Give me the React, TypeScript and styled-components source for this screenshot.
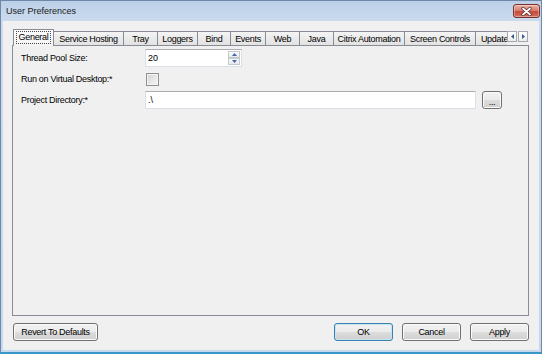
import React from 'react';
import styled, { createGlobalStyle, css } from 'styled-components';

const Global = createGlobalStyle`
  html, body { margin: 0; padding: 0; background: #ffffff; }
  body { font-family: "Liberation Sans", Arial, sans-serif; }
  * { box-sizing: border-box; }
`;

const Window = styled.div`
  width: 542px;
  height: 354px;
  display: flex;
  flex-direction: column;
  background: linear-gradient(#bcd0e8, #cddcef 22px, #c6d8ec);
  border: 1px solid #6f88a9;
  border-bottom: 2px solid #3a95c9;
`;

const TitleBar = styled.header`
  height: 20px;
  flex: none;
  display: flex;
  align-items: flex-start;
  justify-content: space-between;
  padding-left: 5px;
`;

const Title = styled.span`
  font-size: 9px;
  line-height: 20px;
  color: #1a1a1a;
`;

const CloseButton = styled.div`
  width: 27px;
  height: 14px;
  margin-top: 3px;
  margin-right: 1px;
  border: 1px solid #7a3129;
  border-radius: 3px;
  background: linear-gradient(#eab0a6 0%, #d98171 45%, #c5493a 55%, #d0705e 100%);
  box-shadow: inset 0 0 0 1px rgba(255, 255, 255, 0.35);
  display: flex;
  align-items: center;
  justify-content: center;
`;

const Client = styled.main`
  flex: 1;
  min-height: 0;
  margin: 0 2px 2px;
  background: #f0f0f0;
  display: flex;
  flex-direction: column;
  padding: 8px 10px 9px 9px;
  font-size: 9px;
  letter-spacing: -0.3px;
  color: #000;
`;

const TabControl = styled.div`
  flex: 1;
  min-height: 0;
  display: flex;
  flex-direction: column;
`;

const TabStrip = styled.div`
  height: 16px;
  flex: none;
  display: flex;
  align-items: flex-end;
  position: relative;
  z-index: 1;
`;

const TabViewport = styled.div`
  flex: 1;
  min-width: 0;
  height: 100%;
  display: flex;
  align-items: flex-end;
  padding-left: 1px;
  overflow-x: clip;
  overflow-y: visible;
`;

const Tab = styled.div<{ $w: number; $active?: boolean }>`
  flex: none;
  width: ${(p) => p.$w}px;
  height: 14px;
  margin-left: -1px;
  border: 1px solid #898c95;
  border-bottom: none;
  background: linear-gradient(#f4f4f4, #e2e2e2);
  display: flex;
  align-items: center;
  justify-content: center;
  white-space: nowrap;
  overflow: hidden;
  color: #000;
  &:first-child {
    margin-left: 0;
  }
  ${(p) =>
    p.$active &&
    css`
      height: 17px;
      margin-bottom: -1px;
      padding-bottom: 1px;
      background: linear-gradient(#fdfdfd, #f3f3f3);
      position: relative;
      z-index: 2;
    `}
`;

const FocusLabel = styled.span`
  outline: 1px dotted #444;
  outline-offset: 0;
  padding: 0 2px;
  line-height: 11px;
`;

const ScrollButtons = styled.div`
  flex: none;
  align-self: flex-start;
  display: flex;
  gap: 1px;
  margin: 2px 1px 0 0;
`;

const ScrollButton = styled.div`
  width: 10px;
  height: 11px;
  border: 1px solid #a5a9b2;
  background: linear-gradient(#ffffff, #ececec);
  display: flex;
  align-items: center;
  justify-content: center;
`;

const TabPanel = styled.section`
  flex: 1;
  min-height: 0;
  border: 1px solid #898c95;
  background: #f0f0f0;
  padding: 3px 0 0 8px;
  display: grid;
  grid-template-columns: 124px auto;
  grid-auto-rows: 18px;
  row-gap: 3px;
  align-content: start;
  align-items: center;
`;

const Label = styled.label`
  white-space: nowrap;
`;

const TextBox = styled.div<{ $w: number }>`
  width: ${(p) => p.$w}px;
  height: 18px;
  background: #fff;
  border: 1px solid #dbdfe6;
  border-top-color: #abadb3;
  display: flex;
  align-items: stretch;
`;

const TextValue = styled.span`
  flex: 1;
  padding-left: 2px;
  display: flex;
  align-items: center;
  letter-spacing: 0;
`;

const Spin = styled.div`
  width: 12px;
  margin: 1px 1px 1px 0;
  display: flex;
  flex-direction: column;
`;

const SpinHalf = styled.div`
  flex: 1;
  border: 1px solid #c3c7ce;
  background: linear-gradient(#fbfbfb, #e6e8ec);
  display: flex;
  align-items: center;
  justify-content: center;
`;

const CheckBox = styled.div`
  width: 13px;
  height: 13px;
  margin-left: 1px;
  border: 1px solid #8e8f8f;
  background: linear-gradient(135deg, #d3d3d3, #f6f6f6);
  box-shadow: inset 0 0 0 1px #f4f4f4;
`;

const Field = styled.div`
  display: flex;
  align-items: center;
  gap: 6px;
`;

const Footer = styled.footer`
  flex: none;
  display: flex;
  align-items: center;
  gap: 9px;
  margin-top: 7px;
  padding-left: 1px;
`;

const Spacer = styled.div`
  flex: 1;
`;

const Button = styled.button<{ $w: number; $default?: boolean }>`
  width: ${(p) => p.$w}px;
  height: 18px;
  padding: 0;
  font: inherit;
  letter-spacing: inherit;
  color: #000;
  border: 1px solid #707070;
  border-radius: 3px;
  background: linear-gradient(#f2f2f2 0%, #ebebeb 48%, #dddddd 52%, #cfcfcf 100%);
  box-shadow: inset 0 0 0 1px #fbfbfb;
  display: flex;
  align-items: center;
  justify-content: center;
  ${(p) =>
    p.$default &&
    css`
      border-color: #3c7fb1;
      box-shadow: inset 0 0 0 1px #c4e5f6;
    `}
`;

const BrowseButton = styled(Button)`
  align-items: flex-end;
  padding-bottom: 3px;
  line-height: 6px;
`;

const tabs: { label: string; w: number }[] = [
  { label: 'General', w: 41 },
  { label: 'Service Hosting', w: 71 },
  { label: 'Tray', w: 35 },
  { label: 'Loggers', w: 41 },
  { label: 'Bind', w: 34 },
  { label: 'Events', w: 36 },
  { label: 'Web', w: 35 },
  { label: 'Java', w: 35 },
  { label: 'Citrix Automation', w: 72 },
  { label: 'Screen Controls', w: 72 },
  { label: 'Update', w: 39 },
];

const Tri = ({ dir, color }: { dir: 'up' | 'down' | 'left' | 'right'; color: string }) => {
  const pts = {
    up: '0,3 5,3 2.5,0',
    down: '0,0 5,0 2.5,3',
    left: '3,0 3,5 0,2.5',
    right: '0,0 0,5 3,2.5',
  }[dir];
  const horiz = dir === 'left' || dir === 'right';
  return (
    <svg width={horiz ? 3 : 5} height={horiz ? 5 : 3} viewBox={horiz ? '0 0 3 5' : '0 0 5 3'}>
      <polygon points={pts} fill={color} />
    </svg>
  );
};

export default function App() {
  return (
    <>
      <Global />
      <Window>
        <TitleBar>
          <Title>User Preferences</Title>
          <CloseButton>
            <svg width="11" height="9" viewBox="0 0 11 9">
              <path d="M2 1.5 L9 7.5 M9 1.5 L2 7.5" stroke="#5a2620" strokeWidth="3.2" strokeLinecap="round" />
              <path d="M2 1.5 L9 7.5 M9 1.5 L2 7.5" stroke="#ffffff" strokeWidth="1.8" strokeLinecap="round" />
            </svg>
          </CloseButton>
        </TitleBar>
        <Client>
          <TabControl>
            <TabStrip>
              <TabViewport>
                {tabs.map((t, i) =>
                  i === 0 ? (
                    <Tab key={t.label} $w={t.w} $active>
                      <FocusLabel>{t.label}</FocusLabel>
                    </Tab>
                  ) : (
                    <Tab key={t.label} $w={t.w}>
                      {t.label}
                    </Tab>
                  )
                )}
              </TabViewport>
              <ScrollButtons>
                <ScrollButton>
                  <Tri dir="left" color="#3b5b8c" />
                </ScrollButton>
                <ScrollButton>
                  <Tri dir="right" color="#3b5b8c" />
                </ScrollButton>
              </ScrollButtons>
            </TabStrip>
            <TabPanel>
              <Label>Thread Pool Size:</Label>
              <TextBox $w={97}>
                <TextValue>20</TextValue>
                <Spin>
                  <SpinHalf>
                    <Tri dir="up" color="#3f6aa8" />
                  </SpinHalf>
                  <SpinHalf>
                    <Tri dir="down" color="#3f6aa8" />
                  </SpinHalf>
                </Spin>
              </TextBox>
              <Label>Run on Virtual Desktop:*</Label>
              <CheckBox />
              <Label>Project Directory:*</Label>
              <Field>
                <TextBox $w={331}>
                  <TextValue>.\</TextValue>
                </TextBox>
                <BrowseButton $w={20}>...</BrowseButton>
              </Field>
            </TabPanel>
          </TabControl>
          <Footer>
            <Button $w={85}>Revert To Defaults</Button>
            <Spacer />
            <Button $w={59} $default>
              OK
            </Button>
            <Button $w={59}>Cancel</Button>
            <Button $w={59}>Apply</Button>
          </Footer>
        </Client>
      </Window>
    </>
  );
}
